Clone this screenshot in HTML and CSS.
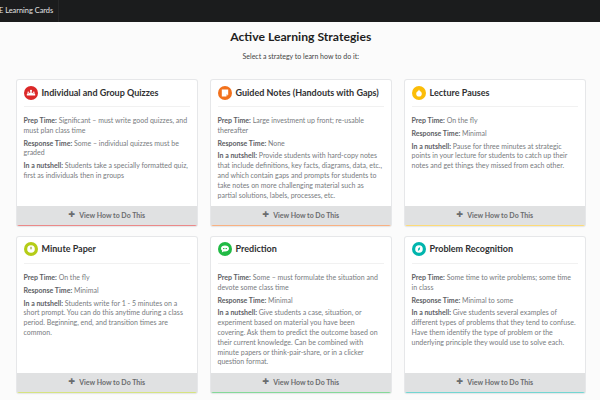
FILE: index.html
```html
<!DOCTYPE html>
<html lang="en">
<head>
<meta charset="utf-8">
<title>Active Learning Strategies</title>
<link rel="stylesheet" href="styles.css">
</head>
<body>
<nav class="navbar"><span class="brand">E Learning Cards</span></nav>
<main class="page">
  <h1 class="title">Active Learning Strategies</h1>
  <p class="subtitle">Select a strategy to learn how to do it:</p>
  <section class="grid">
    <article class="card card-red">
      <header class="card-head">
        <span class="icon"><svg viewBox="0 0 14 14"><path d="M2.800 9.400V8.500c0-.8.6-1.300 1.300-1.300.4 0 .7.100.9.400.2-.8.9-1.400 2-1.400s1.800.6 2 1.400c.2-.3.500-.4.900-.4.700 0 1.300.5 1.300 1.300v.9z" fill="#fff"/><circle cx="7" cy="4.900" r="1.100" fill="#fff"/><circle cx="4.200" cy="6.200" r=".8" fill="#fff"/><circle cx="9.800" cy="6.200" r=".8" fill="#fff"/></svg></span>
        <h2>Individual and Group Quizzes</h2>
      </header>
      <div class="card-body">
        <p><b>Prep Time:</b> Significant – must write good quizzes, and must plan class time</p>
        <p><b>Response Time:</b> Some – individual quizzes must be graded</p>
        <p><b>In a nutshell:</b> Students take a specially formatted quiz, first as individuals then in groups</p>
      </div>
      <button class="view"><span class="plus">✚</span>View How to Do This</button>
    </article>
    <article class="card card-orange">
      <header class="card-head">
        <span class="icon"><svg viewBox="0 0 14 14"><path d="M3.800 3.600h6.400v4.800l-2 2H3.800z" fill="#fff"/><path d="M8 8.400h2l-2 1.800z" fill="#f2b88a"/></svg></span>
        <h2>Guided Notes (Handouts with Gaps)</h2>
      </header>
      <div class="card-body">
        <p><b>Prep Time:</b> Large investment up front; re-usable thereafter</p>
        <p><b>Response Time:</b> None</p>
        <p><b>In a nutshell:</b> Provide students with hard-copy notes that include definitions, key facts, diagrams, data, etc., and which contain gaps and prompts for students to take notes on more challenging material such as partial solutions, labels, processes, etc.</p>
      </div>
      <button class="view"><span class="plus">✚</span>View How to Do This</button>
    </article>
    <article class="card card-yellow">
      <header class="card-head">
        <span class="icon"><svg viewBox="0 0 14 14"><path d="M7 3.400l.8 1.500c1.200.5 2 1.500 2 2.800a2.800 2.800 0 0 1-5.600 0c0-1.300.8-2.300 2-2.800z" fill="#fff"/></svg></span>
        <h2>Lecture Pauses</h2>
      </header>
      <div class="card-body">
        <p><b>Prep Time:</b> On the fly</p>
        <p><b>Response Time:</b> Minimal</p>
        <p><b>In a nutshell:</b> Pause for three minutes at strategic points in your lecture for students to catch up their notes and get things they missed from each other.</p>
      </div>
      <button class="view"><span class="plus">✚</span>View How to Do This</button>
    </article>
    <article class="card card-olive">
      <header class="card-head">
        <span class="icon"><svg viewBox="0 0 14 14"><circle cx="7" cy="7" r="3.800" fill="#fff"/><path d="M7 4.800v2.500" stroke="#7f8f10" stroke-width="1"/></svg></span>
        <h2>Minute Paper</h2>
      </header>
      <div class="card-body">
        <p><b>Prep Time:</b> On the fly</p>
        <p><b>Response Time:</b> Minimal</p>
        <p><b>In a nutshell:</b> Students write for 1 - 5 minutes on a short prompt. You can do this anytime during a class period. Beginning, end, and transition times are common.</p>
      </div>
      <button class="view"><span class="plus">✚</span>View How to Do This</button>
    </article>
    <article class="card card-green">
      <header class="card-head">
        <span class="icon"><svg viewBox="0 0 14 14"><path d="M7 3.600c2.300 0 4 1.300 4 3s-1.700 3-4 3c-.5 0-1-.1-1.400-.2L3.800 10.500l.4-1.800C3.400 8.100 3 7.400 3 6.600c0-1.700 1.700-3 4-3z" fill="#fff"/><path d="M5 6.600h4" stroke="#21ba45" stroke-width="1" stroke-dasharray="1 .5"/></svg></span>
        <h2>Prediction</h2>
      </header>
      <div class="card-body">
        <p><b>Prep Time:</b> Some – must formulate the situation and devote some class time</p>
        <p><b>Response Time:</b> Minimal</p>
        <p><b>In a nutshell:</b> Give students a case, situation, or experiment based on material you have been covering. Ask them to predict the outcome based on their current knowledge. Can be combined with minute papers or think-pair-share, or in a clicker question format.</p>
      </div>
      <button class="view"><span class="plus">✚</span>View How to Do This</button>
    </article>
    <article class="card card-teal">
      <header class="card-head">
        <span class="icon"><svg viewBox="0 0 14 14"><circle cx="7" cy="7" r="3.800" fill="#fff"/><path d="M8.200 4.900L7.700 7.800 5.800 9.100l.5-2.900z" fill="#00b5ad"/></svg></span>
        <h2>Problem Recognition</h2>
      </header>
      <div class="card-body">
        <p><b>Prep Time:</b> Some time to write problems; some time in class</p>
        <p><b>Response Time:</b> Minimal to some</p>
        <p><b>In a nutshell:</b> Give students several examples of different types of problems that they tend to confuse. Have them identify the type of problem or the underlying principle they would use to solve each.</p>
      </div>
      <button class="view"><span class="plus">✚</span>View How to Do This</button>
    </article>
  </section>
</main>
</body>
</html>
```
FILE: styles.css
```css
* { box-sizing: border-box; }
html, body { margin: 0; height: 400px; overflow: hidden; }
body { background: #fbfbfb; font-family: Lato, "Open Sans", sans-serif; color: #333; }
.navbar { height: 22px; background: #1b1c1d; display: flex; align-items: center; }
.brand { width: 60px; margin-left: -1px; padding-bottom: 1px; font-size: 7.400px; color: #e4e4e4; white-space: nowrap; border-right: 1px solid #262728; line-height: 21px; }
.page { padding: 0 15px 0 16.500px; }
.title { margin: 0; padding-top: 7px; text-align: center; font-size: 12.200px; line-height: 16px; font-weight: 700; color: #1f1f1f; }
.subtitle { margin: 0; padding-top: 6px; text-align: center; font-size: 7px; line-height: 10px; color: #444; }
.grid { margin-top: 19px; display: grid; grid-template-columns: repeat(3, minmax(0, 1fr)); column-gap: 13.500px; row-gap: 11px; }
.card { display: flex; flex-direction: column; background: #fff; border-radius: 2px; box-shadow: 0 0 0 1px #e6e7e9, 0 1px 2px rgba(0, 0, 0, .06); border-bottom: 1px solid color-mix(in srgb, var(--accent) 55%, #fff); }
.card-red { --accent: #db2828; }
.card-orange { --accent: #f2711c; }
.card-yellow { --accent: #fbbd08; }
.card-olive { --accent: #b5cc18; }
.card-green { --accent: #21ba45; }
.card-teal { --accent: #00b5ad; }
.card-head { margin: 0 7px; height: 27px; display: flex; align-items: center; gap: 4px; padding-bottom: 1px; border-bottom: 1px solid #f1f1f1; }
.icon { flex: none; width: 14px; height: 14px; border-radius: 50%; background: var(--accent); }
.icon svg { display: block; width: 14px; height: 14px; }
.card-head h2 { margin: 0; font-size: 9px; line-height: 12px; font-weight: 700; color: #2f3032; white-space: nowrap; }
.card-body { padding: 9px 7px 2.600px; font-size: 7px; line-height: 9.800px; color: #787b80; }
.card-body p { margin: 0 0 3px; }
.card-body b { color: #5e6165; font-weight: 700; }
.view { margin-top: auto; height: 19px; border: 0; padding: 0; background: #e0e1e2; color: #6a6c6e; font: 700 7px Lato, sans-serif; display: flex; align-items: center; justify-content: center; gap: 4px; }
.plus { font-size: 8px; line-height: 8px; font-family: "DejaVu Sans", sans-serif; }
```
